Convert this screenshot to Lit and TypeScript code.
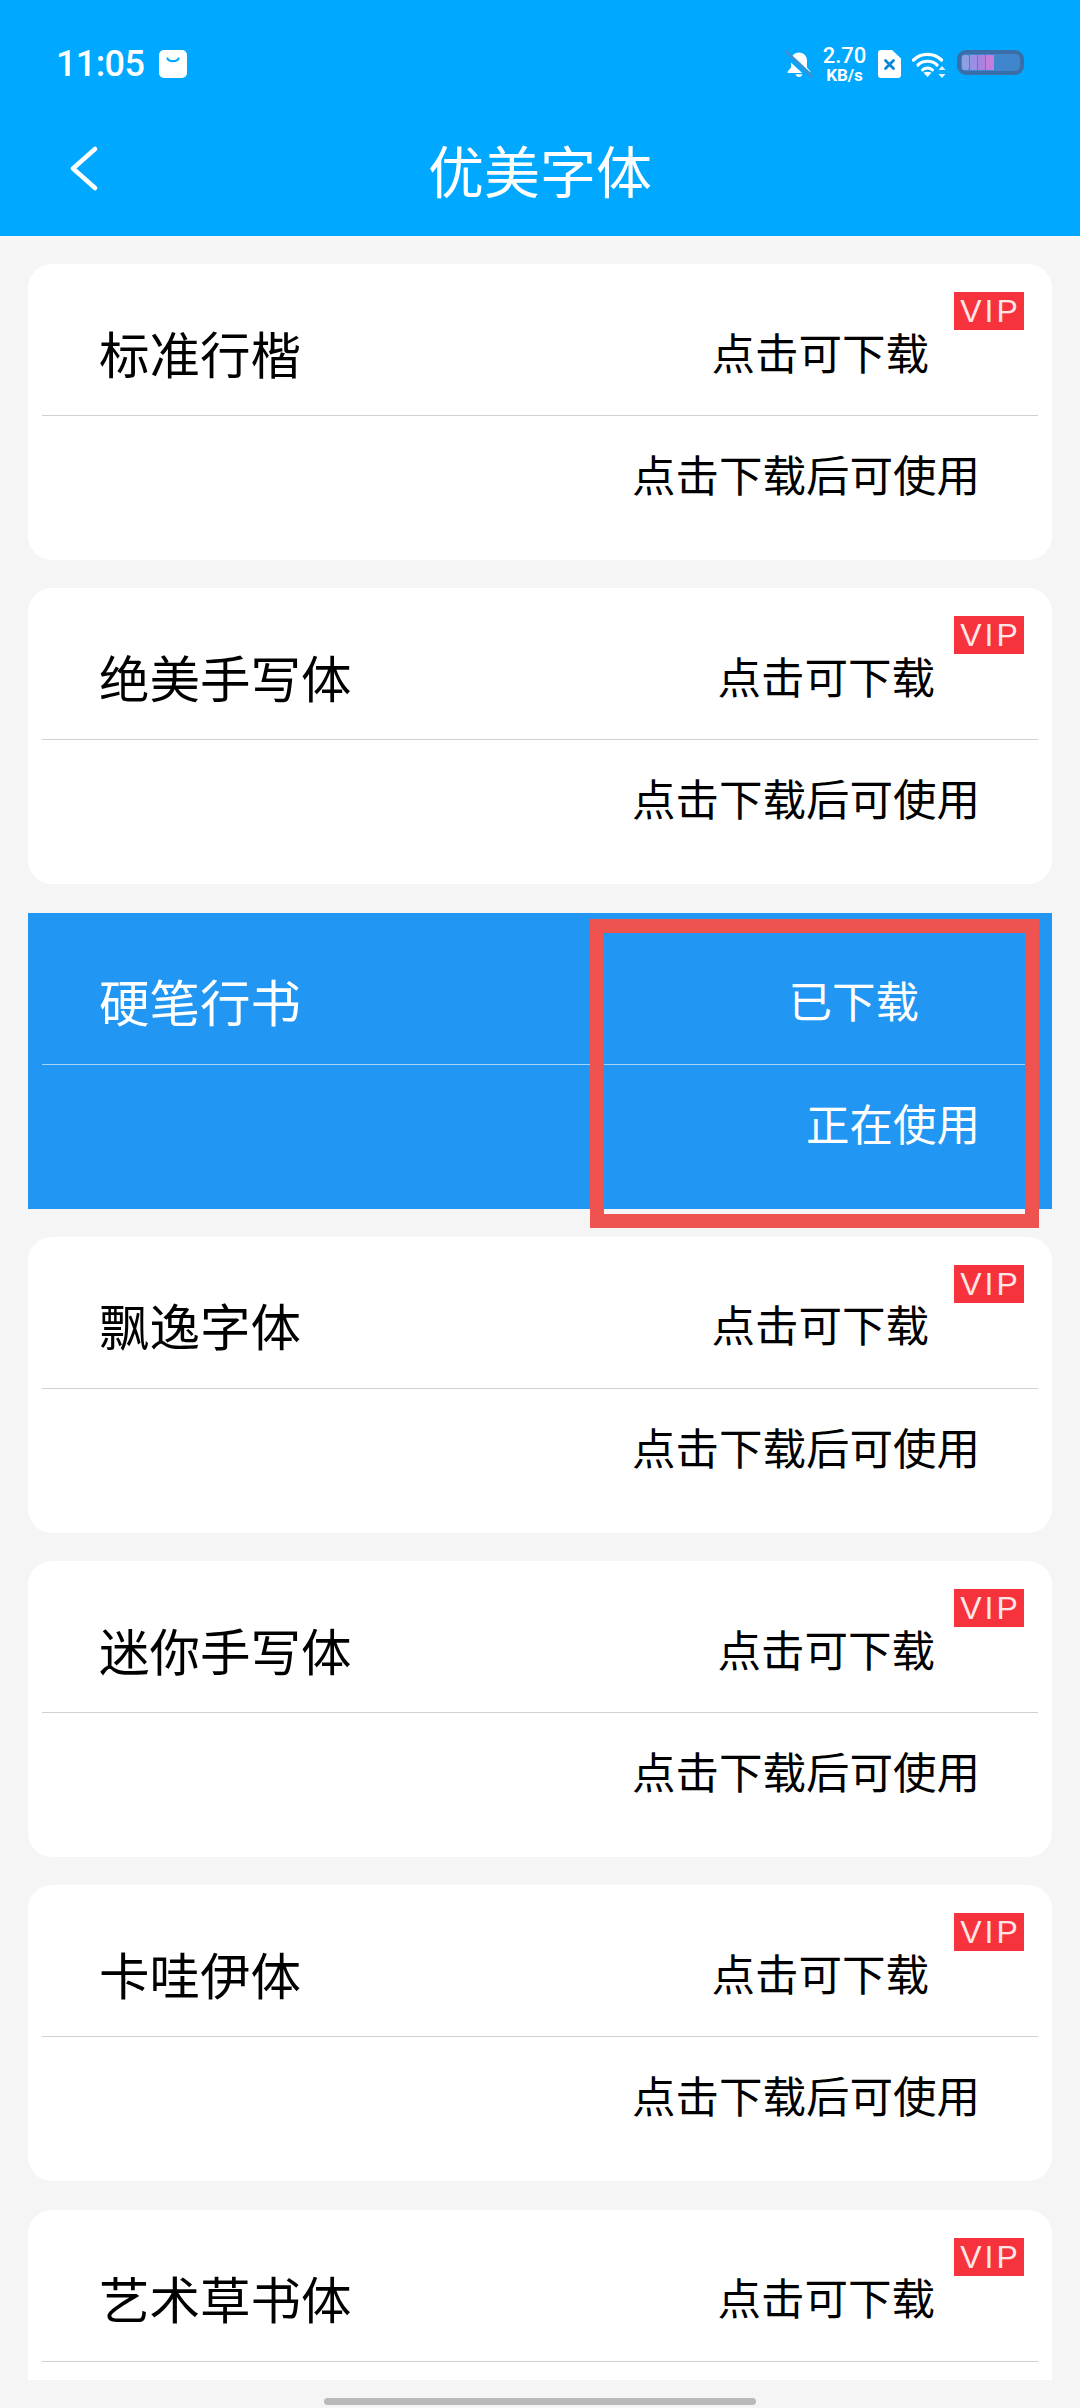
import { LitElement, html, css, svg } from 'lit';
import { customElement } from 'lit/decorators.js';

interface FontRow {
  name: string;
  wide: boolean;
  active?: boolean;
  // the last card runs under the bottom edge of the list, its hint is never seen
  noHint?: boolean;
}

const FONTS: FontRow[] = [
  { name: '标准行楷', wide: false },
  { name: '绝美手写体', wide: true },
  { name: '硬笔行书', wide: false, active: true },
  { name: '飘逸字体', wide: false },
  { name: '迷你手写体', wide: true },
  { name: '卡哇伊体', wide: false },
  { name: '艺术草书体', wide: true, noHint: true },
];

const bagIcon = svg`
  <svg class="ic-bag" viewBox="0 0 28 28">
    <rect width="28" height="28" rx="5" fill="#fff"/>
    <path d="M8.500 8.500c1 3.400 10 3.400 11 0" fill="none" stroke="#00a8ff" stroke-width="2.200" stroke-linecap="round"/>
  </svg>`;

const bellIcon = svg`
  <svg class="ic-bell" viewBox="0 0 28 28">
    <path d="M14 2.500c-5 0-8 3.600-8 8.500v6.500L2.600 21.600c-.5.700 0 1.400.8 1.400h21.200c.8 0 1.300-.7.800-1.400L22 17.500V11c0-4.900-3-8.500-8-8.500z" fill="#fff"/>
    <path d="M10.500 24.200c.6 1.900 2 2.800 3.500 2.800s2.900-.9 3.500-2.800z" fill="#fff"/>
    <path d="M0 3l27 25" stroke="#00a8ff" stroke-width="6"/>
    <path d="M1 1.500l26 25" stroke="#3d8fd0" stroke-width="2.600" stroke-linecap="round"/>
  </svg>`;

const simIcon = svg`
  <svg class="ic-sim" viewBox="0 0 23 28">
    <path d="M3 0h11l9 8.500V25a3 3 0 0 1-3 3H3a3 3 0 0 1-3-3V3a3 3 0 0 1 3-3z" fill="#fff"/>
    <path d="M7.500 10.500l8 8M15.500 10.500l-8 8" stroke="#0a86d8" stroke-width="2.800" stroke-linecap="round"/>
  </svg>`;

const wifiIcon = svg`
  <svg class="ic-wifi" viewBox="0 0 34 28">
    <path d="M1.500 10C9 2.500 22 2.500 29.500 10" fill="none" stroke="#fff" stroke-width="3.200" stroke-linecap="round"/>
    <path d="M6 15c5-5 14-5 19 0" fill="none" stroke="#fff" stroke-width="3.200" stroke-linecap="round"/>
    <path d="M10.500 20c2.700-2.600 7.300-2.600 10 0" fill="none" stroke="#fff" stroke-width="3" stroke-linecap="round"/>
    <path d="M15.500 27l-4-4.200c2.200-1.500 5.800-1.500 8 0z" fill="#fff"/>
    <path d="M30 16l3.500 4h-7zM30 28l3.500-4h-7z" fill="#e6f5ff"/>
  </svg>`;

const batteryIcon = svg`
  <svg class="ic-batt" viewBox="0 0 67 25">
    <rect x="2" y="2" width="63" height="21" rx="7" fill="#3f86cc" stroke="#3a6ea8" stroke-width="4"/>
    <rect x="5" y="5" width="7" height="15" rx="2" fill="#8d9fe2"/>
    <rect x="13" y="5" width="7" height="15" fill="#9a8fe6"/>
    <rect x="21" y="5" width="7" height="15" fill="#a884e2"/>
    <rect x="29" y="5" width="8" height="15" fill="#c47fdc"/>
  </svg>`;

@customElement('app-root')
export class AppRoot extends LitElement {
  static styles = css`
    :host {
      display: block;
      width: 1080px;
      height: 2408px;
      overflow: hidden;
      background: #f5f5f5;
      font-family: "Noto Sans CJK SC", "Noto Sans", sans-serif;
    }
    .header {
      height: 236px;
      background: #00a8ff;
      color: #fff;
      display: flex;
      flex-direction: column;
    }
    .status {
      height: 78px;
      padding: 50px 56px 0 56px;
      box-sizing: border-box;
      display: flex;
      align-items: flex-start;
    }
    .time {
      font-family: Roboto, sans-serif;
      font-weight: 500;
      font-size: 36px;
      line-height: 28px;
      letter-spacing: -0.6px;
    }
    .ic-bag { width: 28px; height: 28px; margin-left: 15px; }
    .spacer { flex: 1; }
    .ic-bell { width: 28px; height: 28px; }
    .speed {
      width: 45px;
      margin: -5px 11px 0 9px;
      font-family: Roboto, sans-serif;
      font-weight: 500;
      display: flex;
      flex-direction: column;
      align-items: center;
    }
    .speed .num { font-size: 22px; line-height: 22px; }
    .speed .unit { font-size: 17px; line-height: 17px; font-weight: 700; }
    .ic-sim { width: 23px; height: 28px; }
    .ic-wifi { width: 34px; height: 28px; margin-left: 11px; }
    .ic-batt { width: 67px; height: 25px; margin-left: 11px; }
    .nav {
      flex: 1;
      position: relative;
      display: flex;
      align-items: center;
      justify-content: center;
      padding-top: 24px;
      box-sizing: border-box;
    }
    .title { font-size: 56px; line-height: 70px; }
    .back {
      position: absolute;
      left: 69px;
      top: 68px;
      width: 30px;
      height: 45px;
    }
    .list {
      height: 2144px;
      overflow: hidden;
      padding: 28px 28px 0;
      box-sizing: border-box;
      display: flex;
      flex-direction: column;
      gap: 28.3px;
    }
    .card {
      position: relative;
      flex: none;
      height: 296px;
      background: #fff;
      border-radius: 24px;
      padding: 0 14px;
      box-sizing: border-box;
      color: #000;
      display: flex;
      flex-direction: column;
    }
    .card.active {
      background: #2196f3;
      border-radius: 0;
      color: #fff;
    }
    .top {
      height: 152px;
      flex: none;
      display: flex;
      align-items: center;
      justify-content: space-between;
      padding: 24px 109px 0 57px;
      border-bottom: 1px solid #d0d0d0;
      box-sizing: border-box;
    }
    .card.wide .top { padding-right: 103px; }
    .card.active .top {
      padding-right: 119px;
      border-bottom-color: rgba(255, 255, 255, 0.6);
    }
    .name { font-size: 50.5px; line-height: 70px; }
    .state { font-size: 43.5px; line-height: 60px; }
    .hint {
      flex: 1;
      display: flex;
      align-items: center;
      justify-content: flex-end;
      padding: 0 58px 28px 0;
      font-size: 43.5px;
      line-height: 60px;
    }
    .vip {
      position: absolute;
      top: 28px;
      right: 28px;
      width: 70px;
      height: 38px;
      padding-left: 3px;
      box-sizing: border-box;
      background: #f6323c;
      color: #ffe6e6;
      font-family: "Liberation Sans", sans-serif;
      font-size: 32px;
      line-height: 38px;
      letter-spacing: 3px;
      text-align: center;
      overflow: hidden;
    }
    .mark {
      position: absolute;
      left: 562px;
      top: 6px;
      width: 449px;
      height: 309px;
      border: 14px solid #ef5350;
      box-sizing: border-box;
    }
    .pill {
      position: absolute;
      left: 324px;
      top: 2398px;
      width: 432px;
      height: 7px;
      border-radius: 4px;
      background: #b9b9b9;
    }
  `;

  render() {
    return html`
      <div class="header">
        <div class="status">
          <span class="time">11:05</span>
          ${bagIcon}
          <span class="spacer"></span>
          ${bellIcon}
          <span class="speed"><span class="num">2.70</span><span class="unit">KB/s</span></span>
          ${simIcon} ${wifiIcon} ${batteryIcon}
        </div>
        <div class="nav">
          <svg class="back" viewBox="0 0 30 45">
            <path d="M26 3L4 22.500 26 42" fill="none" stroke="#fff" stroke-width="4.500" stroke-linecap="round" stroke-linejoin="round"/>
          </svg>
          <span class="title">优美字体</span>
        </div>
      </div>
      <div class="list">
        ${FONTS.map(
          (f) => html`
            <div class="card ${f.wide ? 'wide' : ''} ${f.active ? 'active' : ''}">
              <div class="top">
                <span class="name">${f.name}</span>
                <span class="state">${f.active ? '已下载' : '点击可下载'}</span>
              </div>
              ${f.noHint ? '' : html`<div class="hint">${f.active ? '正在使用' : '点击下载后可使用'}</div>`}
              ${f.active ? html`<div class="mark"></div>` : html`<div class="vip">VIP</div>`}
            </div>
          `
        )}
      </div>
      <div class="pill"></div>
    `;
  }
}
